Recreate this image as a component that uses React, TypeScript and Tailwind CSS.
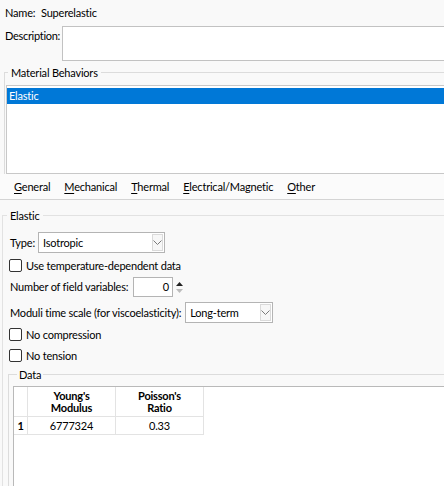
import React from 'react';

const font = { fontFamily: 'Lato, "Noto Sans", sans-serif' };

function Chevron() {
  return (
    <svg width="9" height="6" viewBox="0 0 9 6" fill="none">
      <path d="M0.5 0.5 L4.5 4.5 L8.5 0.5" stroke="#7a7a7a" strokeWidth="1" />
    </svg>
  );
}

function Combo({ value, width }: { value: string; width: string }) {
  return (
    <div className={`flex h-[21px] ${width} items-center border border-[#b4b4b4] bg-white pl-[4px] pr-[1px]`}>
      <span className="flex-1">{value}</span>
      <span className="flex h-[17px] w-[11px] items-center justify-center border border-[#dadada] bg-[#f7f7f7]">
        <Chevron />
      </span>
    </div>
  );
}

function CheckRow({ label }: { label: string }) {
  return (
    <label className="flex h-[21px] items-center gap-[4px]">
      <span className="h-[13px] w-[13px] rounded-[2px] border border-[#333] bg-white" />
      <span>{label}</span>
    </label>
  );
}

function Mnemonic({ text }: { text: string }) {
  return (
    <span>
      <span className="underline underline-offset-2">{text[0]}</span>
      {text.slice(1)}
    </span>
  );
}

const tabs = ['General', 'Mechanical', 'Thermal', 'Electrical/Magnetic', 'Other'];

export default function App() {
  return (
    <div
      className="h-[486px] w-[444px] overflow-hidden bg-[#f9f9f9] text-[11px] leading-[14px] tracking-[-0.2px] text-black"
      style={font}
    >
      {/* name + description */}
      <div className="flex h-[26px] items-center pl-[5px]">
        <span className="w-[36px]">Name:</span>
        <span>Superelastic</span>
      </div>
      <div className="flex h-[35px] pl-[5px]">
        <span className="w-[57px] pt-[3px] tracking-[-0.3px]">Description:</span>
        <div className="mr-[-10px] flex-1 border border-[#c2c2c2] bg-white" />
      </div>

      {/* material behaviors */}
      <fieldset className="ml-[4px] mr-[-10px] mt-[5px] border-l border-t border-[#dcdcdc] pb-0">
        <legend className="ml-[3px] px-[3px] leading-[13px]">Material Behaviors</legend>
        <div className="ml-[1px] mt-[6px] h-[89px] border border-[#c8c8c8] bg-white pt-[2px]">
          <div className="flex h-[16px] items-center bg-[#0078d7] pl-[2px] text-white">Elastic</div>
        </div>
      </fieldset>

      {/* behavior menu */}
      <div className="flex h-[26px] items-center gap-[14px] border-b border-[#d4d4d4] bg-[#fbfbfb] pb-[1px] pl-[14px] pt-[2px]">
        {tabs.map((t) => (
          <Mnemonic key={t} text={t} />
        ))}
      </div>

      {/* elastic options */}
      <fieldset className="ml-[2px] mr-[-10px] mt-[9px] border-l border-t border-[#e2e2e2]">
        <legend className="ml-[4px] px-[3px] leading-[13px]">Elastic</legend>
        <div className="flex flex-col pl-[6px] pt-[10px]">
          <div className="flex h-[21px] items-center gap-[3px] pl-[1px]">
            <span>Type:</span>
            <Combo value="Isotropic" width="w-[127px]" />
          </div>
          <div className="mt-[2px]">
            <CheckRow label="Use temperature-dependent data" />
          </div>
          <div className="mt-[1px] flex h-[20px] items-center pl-[1px]">
            <span className="w-[123px]">Number of field variables:</span>
            <div className="flex h-[20px] w-[40px] items-center justify-end border border-[#b4b4b4] bg-white pr-[3px]">
              0
            </div>
            <div className="ml-[1px] flex h-[20px] w-[10px] flex-col items-center justify-center gap-[3px]">
              <svg width="7" height="4" viewBox="0 0 7 4">
                <path d="M3.5 0 L7 4 L0 4 Z" fill="#222" />
              </svg>
              <svg width="7" height="4" viewBox="0 0 7 4">
                <path d="M0 0 L7 0 L3.5 4 Z" fill="#bcbcbc" />
              </svg>
            </div>
          </div>
          <div className="mt-[5px] flex h-[21px] items-center gap-[4px] pl-[1px]">
            <span>Moduli time scale (for viscoelasticity):</span>
            <Combo value="Long-term" width="w-[88px]" />
          </div>
          <div className="mt-[1px]">
            <CheckRow label="No compression" />
          </div>
          <CheckRow label="No tension" />
        </div>

        {/* data table */}
        <fieldset className="ml-[5px] mt-[2px] border-l border-t border-[#dcdcdc]">
          <legend className="ml-[8px] px-[2px] leading-[13px]">Data</legend>
          <div className="ml-[4px] mt-[5px] h-[120px] border-l border-t border-[#b9b9b9] bg-white">
            <div className="flex">
              <div className="w-[14px] border-b border-r border-[#e3e3e3]" />
              {["Young's|Modulus", "Poisson's|Ratio"].map((h) => (
                <div
                  key={h}
                  className="flex h-[30px] w-[88px] flex-col items-center justify-center border-b border-r border-[#e3e3e3] font-bold leading-[12px]"
                >
                  {h.split('|').map((l) => (
                    <span key={l}>{l}</span>
                  ))}
                </div>
              ))}
            </div>
            <div className="flex h-[18px]">
              <div className="flex w-[14px] items-center justify-center border-b border-r border-[#e3e3e3] font-bold">
                1
              </div>
              <div className="flex w-[88px] items-center justify-center border-b border-r border-[#e3e3e3]">6777324</div>
              <div className="flex w-[88px] items-center justify-center border-b border-r border-[#e3e3e3]">0.33</div>
            </div>
          </div>
        </fieldset>
      </fieldset>
    </div>
  );
}
